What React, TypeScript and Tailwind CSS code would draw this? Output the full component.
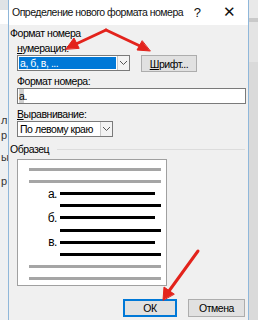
import React from "react";

const font = { fontFamily: '"Liberation Sans", Arial, sans-serif' };

function Chevron() {
  return (
    <svg width="9" height="6" viewBox="0 0 9 6">
      <path d="M1 1 L4.5 4.5 L8 1" fill="none" stroke="#555" strokeWidth="1" />
    </svg>
  );
}

function Arrows() {
  return (
    <svg className="absolute left-0 top-0 pointer-events-none" width="258" height="320" viewBox="0 0 258 320">
      <g stroke="#e3231c" strokeWidth="3" strokeLinecap="round" fill="#e3231c">
        <line x1="106" y1="30" x2="76" y2="44" />
        <polygon points="66,49 74,38 79,48" strokeWidth="1" />
        <line x1="106" y1="30" x2="140" y2="46" />
        <polygon points="150,51 137,50 142,41" strokeWidth="1" />
        <line x1="198" y1="251" x2="169" y2="291" />
        <polygon points="163,300 164,287 174,294" strokeWidth="1" />
      </g>
    </svg>
  );
}

export default function App() {
  const preview = [
    { kind: "gray" },
    { kind: "gray" },
    { kind: "black", mark: "а." },
    { kind: "long" },
    { kind: "black", mark: "б." },
    { kind: "long" },
    { kind: "black", mark: "в." },
    { kind: "long" },
    { kind: "gray" },
    { kind: "gray" },
  ];

  return (
    <div className="relative flex h-[320px] w-[258px] overflow-hidden whitespace-nowrap bg-[#e6e6e6] text-black" style={font}>
      {/* background document on the left */}
      <div className="flex w-[8px] shrink-0 flex-col bg-[#eef0f2] text-[11px] leading-[12px] text-[#333]">
        <div className="h-[10px] bg-[#dfe3e6]" />
        <div className="h-[14px] bg-white" />
        <div className="mt-[90px] pl-[1px]">л</div>
        <div className="mt-[3px] pl-[1px]">р</div>
        <div className="mt-[10px] pl-[1px]">ы</div>
        <div className="mt-[12px] pl-[1px]">р</div>
      </div>

      {/* dialog */}
      <div className="flex w-[241px] shrink-0 flex-col border-x border-[#8fb7da]">
        <div className="flex h-[25px] items-center bg-white pl-[3px] text-[10.5px] tracking-[-0.5px] text-[#111]">
          <span>Определение нового формата номера</span>
          <span className="ml-auto w-[20px] text-center text-[13px]">?</span>
          <span className="ml-[14px] mr-[11px] w-[16px] text-center text-[15px] font-light">✕</span>
        </div>

        <div className="flex flex-1 flex-col bg-[#f0f0f0] pl-[1px] pr-[2px] text-[10.5px] leading-[14px] tracking-[-0.45px]">
          <div className="mt-[1px]">Формат номера</div>

          <div className="ml-[7px] mt-[1px]">
            <span className="underline">н</span>умерация:
          </div>
          <div className="ml-[7px] flex items-start">
            <div className="flex h-[16px] w-[113px] border border-[#7a7a7a] bg-white">
              <div className="m-[1px] flex flex-1 items-center bg-[#0078d7] pl-[1px] text-white">
                а, б, в, ...
              </div>
              <div className="flex w-[12px] items-center justify-center border-l border-[#c8c8c8] bg-[#f3f3f3]">
                <Chevron />
              </div>
            </div>
            <div className="ml-[11px] flex h-[17px] w-[56px] items-center justify-center border border-[#adadad] bg-[#e1e1e1]">
              <span className="underline">Ш</span>рифт...
            </div>
          </div>

          <div className="ml-[7px] mt-[2px]">Формат номера:</div>
          <div className="ml-[7px] flex h-[16px] w-[229px] items-center border border-[#7a7a7a] bg-white pl-[1px]">
            <span className="bg-[#cfcfcf]">а</span>.
          </div>

          <div className="ml-[7px] mt-[3px]">
            <span className="underline">В</span>ыравнивание:
          </div>
          <div className="ml-[7px] flex h-[16px] w-[96px] border border-[#7a7a7a] bg-white">
            <div className="flex flex-1 items-center pl-[2px]">По левому краю</div>
            <div className="flex w-[12px] items-center justify-center border-l border-[#c8c8c8] bg-[#f3f3f3]">
              <Chevron />
            </div>
          </div>

          <div className="mt-[5px] flex items-center">
            <span>Образец</span>
            <div className="ml-[8px] mr-[1px] h-px flex-1 bg-[#dcdcdc]" />
          </div>

          <div className="ml-[7px] mt-[3px] flex h-[127px] w-[150px] flex-col border border-[#a0a0a0] bg-white pt-[3px]">
            {preview.map((row, i) => (
              <div key={i} className="flex h-[12.25px] items-center">
                {row.kind === "gray" && <div className="ml-[11px] h-[3px] w-[132px] bg-[#a5a5a5]" />}
                {row.kind === "black" && (
                  <>
                    <span className="w-[39px] text-right text-[12px] leading-[12px]">{row.mark}</span>
                    <div className="ml-[3px] h-[3px] w-[95px] bg-black" />
                  </>
                )}
                {row.kind === "long" && <div className="ml-[42px] h-[3px] w-[101px] bg-black" />}
              </div>
            ))}
          </div>

          <div className="mt-[13px] flex justify-end pr-[1px]">
            <div className="flex h-[18px] w-[54px] items-center justify-center border-2 border-[#0078d7] bg-[#e1e1e1]">
              ОК
            </div>
            <div className="ml-[11px] flex h-[18px] w-[57px] items-center justify-center border border-[#adadad] bg-[#e1e1e1]">
              Отмена
            </div>
          </div>
        </div>
      </div>

      {/* background on the right */}
      <div className="flex flex-1 flex-col bg-[#dadada]">
        <div className="h-[18px] bg-[#e9e9e9]" />
        <div className="h-[4px] bg-[#c9c9c9]" />
        <div className="h-[40px] bg-[#e4e4e4]" />
      </div>

      <Arrows />
    </div>
  );
}
